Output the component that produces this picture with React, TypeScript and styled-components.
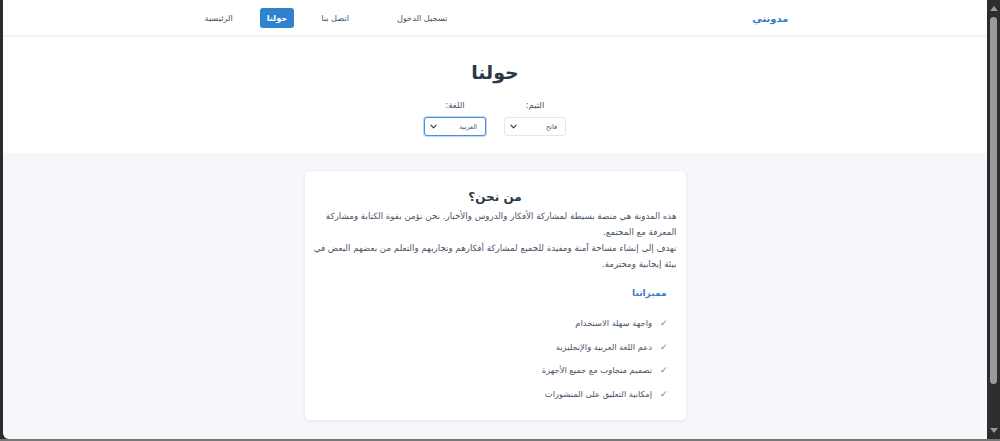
import React from 'react';
import styled, { createGlobalStyle } from 'styled-components';

const GlobalStyle = createGlobalStyle`
    html, body {
        margin: 0;
        padding: 0;
        height: 100%;
        overflow: hidden;
    }
    body {
        background: #2b2b2b;
        font-family: "DejaVu Sans", "Noto Sans", sans-serif;
    }
    #root {
        height: 100%;
    }
`;

const Frame = styled.div`
    display: flex;
    height: 439px;
    padding-left: 3px;
    border-bottom: 2px solid #777;
`;

const Page = styled.div`
    flex: 1;
    display: flex;
    flex-direction: column;
    background: #f5f7fa;
    border-bottom-left-radius: 6px;
    overflow: hidden;
    direction: rtl;
`;

const Scrollbar = styled.div`
    width: 13px;
    display: flex;
    flex-direction: column;
    align-items: center;
    background: #2d2d2d;
    padding: 4px 0;
    box-sizing: border-box;
`;

const Arrow = styled.div<{ $down?: boolean }>`
    width: 0;
    height: 0;
    border-left: 4px solid transparent;
    border-right: 4px solid transparent;
    ${props => props.$down ? 'border-top: 5px solid #9a9a9a;' : 'border-bottom: 5px solid #9a9a9a;'}
    margin: 2px 0;
`;

const Thumb = styled.div`
    flex: 1;
    width: 7px;
    margin: 4px 0 42px;
    background: #9a9a9a;
    border-radius: 4px;
`;

const Navbar = styled.header`
    background: #fff;
    height: 35px;
    box-shadow: 0 1px 3px rgba(0, 0, 0, 0.06);
    border-bottom: 1px solid #eef0f3;
    position: relative;
    z-index: 1;
`;

const NavInner = styled.div`
    width: 587px;
    height: 100%;
    box-sizing: border-box;
    padding-left: 3px;
    margin: 0 auto;
    display: flex;
    align-items: center;
    justify-content: space-between;
`;

const Brand = styled.a`
    color: #3a7bc8;
    font-weight: bold;
    font-size: 10px;
    margin-top: 2px;
`;

const NavLinks = styled.nav`
    display: flex;
    align-items: center;
    gap: 27px;
`;

const NavLink = styled.a<{ $active?: boolean; $spaced?: boolean }>`
    font-size: 8.2px;
    color: ${props => props.$active ? '#fff' : '#4a5568'};
    font-weight: ${props => props.$active ? 'bold' : 'normal'};
    background: ${props => props.$active ? '#3182ce' : 'transparent'};
    padding: ${props => props.$active ? '5px 7px' : '0'};
    border-radius: 3px;
    margin-left: ${props => props.$spaced ? '21px' : '0'};
`;

const Hero = styled.section`
    background: #fff;
    padding: 22px 0 17px;
    display: flex;
    flex-direction: column;
    align-items: center;
`;

const Title = styled.h1`
    margin: 0 0 14px;
    font-size: 19px;
    line-height: 28px;
    color: #2d3748;
    font-weight: bold;
`;

const Controls = styled.div`
    display: flex;
    gap: 18px;
`;

const Field = styled.div`
    display: flex;
    flex-direction: column;
    align-items: center;
    gap: 6px;
`;

const Label = styled.label`
    font-size: 8.5px;
    line-height: 11px;
    color: #4a5568;
`;

const Select = styled.div<{ $focus?: boolean }>`
    width: 62px;
    height: 19px;
    box-sizing: border-box;
    border: 1px solid ${props => props.$focus ? '#4a8fd8' : '#e2e8f0'};
    box-shadow: ${props => props.$focus ? '0 0 0 1px rgba(74, 143, 216, 0.35)' : 'none'};
    border-radius: 3px;
    background: #fff;
    display: flex;
    align-items: center;
    justify-content: space-between;
    padding: 0 8px 0 5px;
    font-size: 6.5px;
    color: #4a5568;
`;

const Main = styled.main`
    flex: 1;
    padding-top: 17px;
    display: flex;
    justify-content: center;
`;

const Card = styled.article`
    width: 383px;
    height: 251px;
    box-sizing: border-box;
    background: #fff;
    border: 1px solid #edf0f4;
    border-radius: 6px;
    box-shadow: 0 1px 3px rgba(0, 0, 0, 0.05);
    padding: 18px 9px 0;
`;

const CardTitle = styled.h2`
    margin: 0 0 3px;
    text-align: center;
    font-size: 12px;
    line-height: 16px;
    font-weight: bold;
    color: #2d3748;
`;

const Paragraph = styled.p`
    margin: 0;
    font-size: 8.7px;
    line-height: 16px;
    color: #4a5568;
`;

const FeaturesTitle = styled.h3`
    margin: 15px 10px 18px 0;
    font-size: 9px;
    line-height: 12px;
    font-weight: bold;
    color: #3a7bc8;
`;

const FeatureList = styled.ul`
    list-style: none;
    margin: 0;
    padding: 0 9px 0 0;
    display: flex;
    flex-direction: column;
    gap: 10px;
`;

const FeatureItem = styled.li`
    display: flex;
    align-items: center;
    gap: 8px;
    font-size: 8.3px;
    color: #4a5568;
    line-height: 13.5px;
`;

const Check = styled.span`
    color: #38a169;
    font-size: 9px;
`;

const Chevron = () => (
    <svg width="7" height="5" viewBox="0 0 8 5" fill="none">
        <path d="M1 1l3 3 3-3" stroke="#2d3748" strokeWidth="1.3" strokeLinecap="round" strokeLinejoin="round" />
    </svg>
);

const features = [
    'واجهة سهلة الاستخدام',
    'دعم اللغة العربية والإنجليزية',
    'تصميم متجاوب مع جميع الأجهزة',
    'إمكانية التعليق على المنشورات',
];

export default function App() {
    return (
        <>
            <GlobalStyle />
            <Frame>
                <Page>
                    <Navbar>
                        <NavInner>
                            <Brand>مدونتي</Brand>
                            <NavLinks>
                                <NavLink $spaced>تسجيل الدخول</NavLink>
                                <NavLink>اتصل بنا</NavLink>
                                <NavLink $active>حولنا</NavLink>
                                <NavLink>الرئيسية</NavLink>
                            </NavLinks>
                        </NavInner>
                    </Navbar>
                    <Hero>
                        <Title>حولنا</Title>
                        <Controls>
                            <Field>
                                <Label>الثيم:</Label>
                                <Select>
                                    <span>فاتح</span>
                                    <Chevron />
                                </Select>
                            </Field>
                            <Field>
                                <Label>اللغة:</Label>
                                <Select $focus>
                                    <span>العربية</span>
                                    <Chevron />
                                </Select>
                            </Field>
                        </Controls>
                    </Hero>
                    <Main>
                        <Card>
                            <CardTitle>من نحن؟</CardTitle>
                            <Paragraph>
                                هذه المدونة هي منصة بسيطة لمشاركة الأفكار والدروس والأخبار. نحن نؤمن بقوة الكتابة ومشاركة المعرفة مع المجتمع.
                            </Paragraph>
                            <Paragraph>
                                نهدف إلى إنشاء مساحة آمنة ومفيدة للجميع لمشاركة أفكارهم وتجاربهم والتعلم من بعضهم البعض في بيئة إيجابية ومحترمة.
                            </Paragraph>
                            <FeaturesTitle>مميزاتنا</FeaturesTitle>
                            <FeatureList>
                                {features.map(f => (
                                    <FeatureItem key={f}>
                                        <Check>✓</Check>
                                        <span>{f}</span>
                                    </FeatureItem>
                                ))}
                            </FeatureList>
                        </Card>
                    </Main>
                </Page>
                <Scrollbar>
                    <Arrow />
                    <Thumb />
                    <Arrow $down />
                </Scrollbar>
            </Frame>
        </>
    );
}
